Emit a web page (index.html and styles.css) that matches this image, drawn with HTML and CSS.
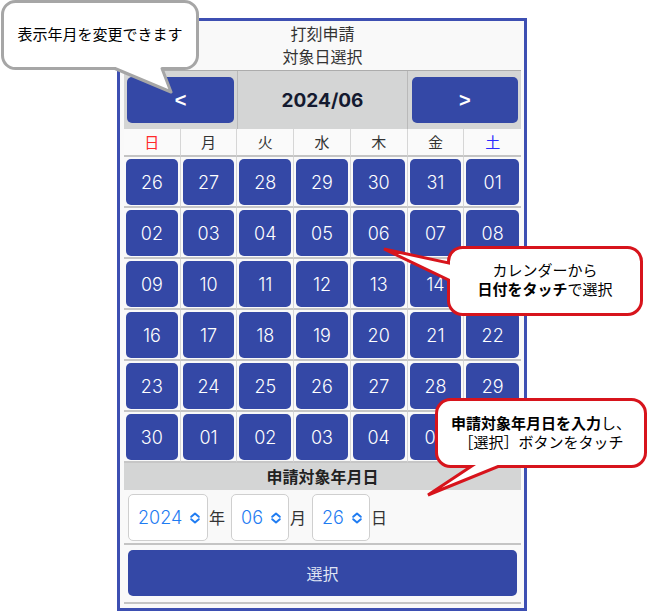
FILE: index.html
```html
<!DOCTYPE html>
<html lang="ja">
<head>
<meta charset="utf-8">
<title>打刻申請 対象日選択</title>
<link rel="stylesheet" href="styles.css">
</head>
<body>
<div class="stage">
  <div class="phone">
    <div class="title">打刻申請<br>対象日選択</div>
    <div class="nav">
      <div class="nav-cell"><div class="nav-btn">&lt;</div></div>
      <div class="nav-month">2024/06</div>
      <div class="nav-cell nav-next"><div class="nav-btn">&gt;</div></div>
    </div>
    <div class="cal">
      <div class="wd sun">日</div><div class="wd">月</div><div class="wd">火</div><div class="wd">水</div><div class="wd">木</div><div class="wd">金</div><div class="wd sat">土</div>
      <div class="day"><div class="day-btn">26</div></div><div class="day"><div class="day-btn">27</div></div><div class="day"><div class="day-btn">28</div></div><div class="day"><div class="day-btn">29</div></div><div class="day"><div class="day-btn">30</div></div><div class="day"><div class="day-btn">31</div></div><div class="day"><div class="day-btn">01</div></div>
      <div class="day"><div class="day-btn">02</div></div><div class="day"><div class="day-btn">03</div></div><div class="day"><div class="day-btn">04</div></div><div class="day"><div class="day-btn">05</div></div><div class="day"><div class="day-btn">06</div></div><div class="day"><div class="day-btn">07</div></div><div class="day"><div class="day-btn">08</div></div>
      <div class="day"><div class="day-btn">09</div></div><div class="day"><div class="day-btn">10</div></div><div class="day"><div class="day-btn">11</div></div><div class="day"><div class="day-btn">12</div></div><div class="day"><div class="day-btn">13</div></div><div class="day"><div class="day-btn">14</div></div><div class="day"><div class="day-btn">15</div></div>
      <div class="day"><div class="day-btn">16</div></div><div class="day"><div class="day-btn">17</div></div><div class="day"><div class="day-btn">18</div></div><div class="day"><div class="day-btn">19</div></div><div class="day"><div class="day-btn">20</div></div><div class="day"><div class="day-btn">21</div></div><div class="day"><div class="day-btn">22</div></div>
      <div class="day"><div class="day-btn">23</div></div><div class="day"><div class="day-btn">24</div></div><div class="day"><div class="day-btn">25</div></div><div class="day"><div class="day-btn">26</div></div><div class="day"><div class="day-btn">27</div></div><div class="day"><div class="day-btn">28</div></div><div class="day"><div class="day-btn">29</div></div>
      <div class="day"><div class="day-btn">30</div></div><div class="day"><div class="day-btn">01</div></div><div class="day"><div class="day-btn">02</div></div><div class="day"><div class="day-btn">03</div></div><div class="day"><div class="day-btn">04</div></div><div class="day"><div class="day-btn">05</div></div><div class="day"><div class="day-btn">06</div></div>
    </div>
    <div class="section-head">申請対象年月日</div>
    <div class="picker">
      <div class="sel sel-y"><span>2024</span><svg class="chev" viewBox="0 0 12 12" width="12" height="12"><path d="M2.2 4.8 L6 1.6 L9.8 4.8 M2.2 7.2 L6 10.4 L9.8 7.2" fill="none" stroke="#1f7cf2" stroke-width="2" stroke-linecap="round" stroke-linejoin="round"/></svg></div>
      <span class="unit">年</span>
      <div class="sel sel-m"><span>06</span><svg class="chev" viewBox="0 0 12 12" width="12" height="12"><path d="M2.2 4.8 L6 1.6 L9.8 4.8 M2.2 7.2 L6 10.4 L9.8 7.2" fill="none" stroke="#1f7cf2" stroke-width="2" stroke-linecap="round" stroke-linejoin="round"/></svg></div>
      <span class="unit">月</span>
      <div class="sel sel-d"><span>26</span><svg class="chev" viewBox="0 0 12 12" width="12" height="12"><path d="M2.2 4.8 L6 1.6 L9.8 4.8 M2.2 7.2 L6 10.4 L9.8 7.2" fill="none" stroke="#1f7cf2" stroke-width="2" stroke-linecap="round" stroke-linejoin="round"/></svg></div>
      <span class="unit">日</span>
    </div>
    <div class="submit-row"><div class="submit">選択</div></div>
  </div>

  <svg class="overlay" viewBox="0 0 648 611" width="648" height="611">
    <path d="M15.5 1.5 H184.5 A13 13 0 0 1 197.5 14.5 V55.5 A13 13 0 0 1 184.5 68.5 H162 L171 92 L115 68.5 H15.5 A13 13 0 0 1 2.5 55.5 V14.5 A13 13 0 0 1 15.5 1.5 Z" fill="#fff" stroke="#a6a6a6" stroke-width="3" stroke-linejoin="round"/>
    <path d="M462.5 247.5 H627.5 A14 14 0 0 1 641.5 261.5 V300.5 A14 14 0 0 1 627.5 314.5 H462.5 A14 14 0 0 1 448.5 300.5 V280 L384 249 L448.5 263 V261.5 A14 14 0 0 1 462.5 247.5 Z" fill="#fff" stroke="#d7141c" stroke-width="3" stroke-linejoin="miter"/>
    <path d="M450.5 399.5 H631.5 A14 14 0 0 1 645.5 413.5 V452.5 A14 14 0 0 1 631.5 466.5 H498 L428 495 L471 466.5 H450.5 A14 14 0 0 1 436.5 452.5 V413.5 A14 14 0 0 1 450.5 399.5 Z" fill="#fff" stroke="#d7141c" stroke-width="3" stroke-linejoin="miter"/>
  </svg>
  <div class="note note-1"><p class="note-text">表示年月を変更できます</p></div>
  <div class="note note-2"><p class="note-text">カレンダーから<br><b>日付をタッチ</b>で選択</p></div>
  <div class="note note-3"><p class="note-text"><b>申請対象年月日を入力</b>し、<br>［選択］ボタンをタッチ</p></div>
</div>
</body>
</html>
```

FILE: styles.css
```css
html, body {
  margin: 0;
  padding: 0;
  background: #ffffff;
}

body {
  font-family: "Noto Sans CJK JP", "Noto Sans", sans-serif;
}

.stage {
  position: relative;
  width: 648px;
  height: 611px;
  overflow: hidden;
  box-sizing: border-box;
  padding: 18px 0 0 117px;
}

.phone {
  width: 410px;
  height: 593px;
  box-sizing: border-box;
  border: 3px solid #3d4fb2;
  background: #f9f9f9;
  padding: 0 3px 0 4px;
  overflow: hidden;
}

.title {
  height: 49px;
  box-sizing: border-box;
  padding-top: 1px;
  text-align: center;
  font-size: 16px;
  line-height: 23px;
  color: #333333;
}

.nav {
  display: grid;
  grid-template-columns: 2fr 3fr 2fr;
  height: 59px;
  box-sizing: border-box;
  border-top: 1px solid #acacac;
  background: #d4d5d5;
}

.nav-cell {
  padding: 6px 3px 0 3px;
}

.nav-next {
  padding-left: 4px;
}

.nav-btn {
  height: 46px;
  border-radius: 5px;
  background: #3448a6;
  color: #ffffff;
  font-family: "Liberation Sans", sans-serif;
  font-weight: bold;
  font-size: 20px;
  display: flex;
  align-items: center;
  justify-content: center;
}

.nav-month {
  border-left: 1px solid #b9b9b9;
  border-right: 1px solid #b9b9b9;
  display: flex;
  align-items: center;
  justify-content: center;
  font-family: Inter, "Liberation Sans", sans-serif;
  font-weight: 700;
  font-size: 19px;
  color: #141a30;
}

.cal {
  display: grid;
  grid-template-columns: repeat(7, 1fr);
}

.wd {
  height: 28px;
  box-sizing: border-box;
  line-height: 26px;
  text-align: center;
  font-size: 15px;
  color: #333333;
  background: #fafafa;
  border-right: 1px solid #d6d6d6;
  border-bottom: 2px solid #c4c4c4;
}

.wd.sun {
  color: #ff2a2a;
}

.wd.sat {
  color: #2a2aff;
}

.wd:nth-child(7n),
.day:nth-child(7n) {
  border-right: none;
}

.day {
  padding: 2px 2px 1px 2px;
  border-right: 1px solid #d6d6d6;
  border-bottom: 2px solid #c6c6c6;
}

.day-btn {
  height: 46px;
  border-radius: 5px;
  background: #3448a6;
  color: #ffffff;
  font-family: Inter, "Liberation Sans", sans-serif;
  font-weight: 300;
  font-size: 18px;
  display: flex;
  align-items: center;
  justify-content: center;
}

.section-head {
  height: 27px;
  line-height: 27px;
  background: #d4d5d5;
  text-align: center;
  font-weight: bold;
  font-size: 16px;
  color: #222222;
}

.picker {
  height: 55px;
  box-sizing: border-box;
  padding: 4px 0 0 4px;
  display: flex;
  align-items: flex-start;
  border-bottom: 2px solid #c4c4c4;
}

.sel {
  height: 47px;
  box-sizing: border-box;
  border: 1px solid #cfcfcf;
  border-radius: 5px;
  background: #ffffff;
  display: flex;
  align-items: center;
  justify-content: space-between;
  padding: 0 6px 0 9px;
  font-family: Inter, "Liberation Sans", sans-serif;
  font-weight: 300;
  font-size: 18px;
  color: #1f7cf2;
}

.sel-y {
  width: 80px;
}

.sel-m,
.sel-d {
  width: 58px;
}

.chev {
  display: block;
  flex: none;
}

.unit {
  font-size: 16px;
  line-height: 47px;
  color: #333333;
  margin: 0 6px 0 1px;
}

.submit-row {
  height: 59px;
  box-sizing: border-box;
  padding: 5px 4px 0 4px;
  border-bottom: 2px solid #c4c4c4;
}

.submit {
  height: 46px;
  border-radius: 5px;
  background: #3448a6;
  color: #dfe3f3;
  font-size: 16px;
  display: flex;
  align-items: center;
  justify-content: center;
}

.overlay {
  position: absolute;
  left: 0;
  top: 0;
}

.note {
  position: absolute;
  display: flex;
  align-items: center;
  justify-content: center;
}

.note-text {
  margin: 0;
  text-align: center;
  font-size: 15px;
  line-height: 19px;
  color: #000000;
  white-space: nowrap;
}

.note-text b {
  font-weight: bold;
}

.note-1 {
  left: 1px;
  top: 0;
  width: 198px;
  height: 66px;
}

.note-2 {
  left: 447px;
  top: 245px;
  width: 196px;
  height: 68px;
}

.note-3 {
  left: 435px;
  top: 398px;
  width: 212px;
  height: 68px;
}
```
